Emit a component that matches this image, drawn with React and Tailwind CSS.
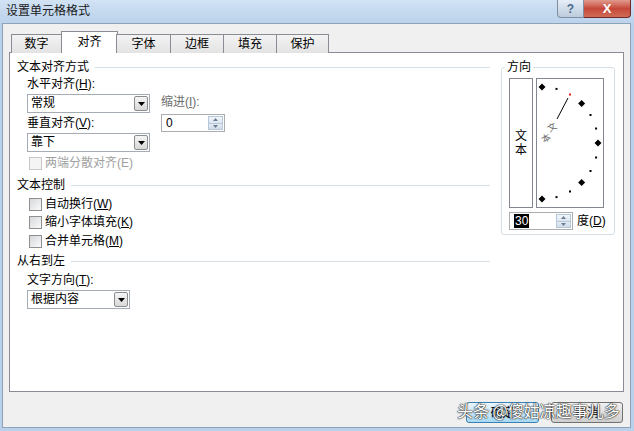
import React from "react";

const font = "font-['Liberation_Sans','Noto_Sans_CJK_SC',sans-serif]";

const Arrow = () => (
  <svg width="7" height="4" viewBox="0 0 7 4">
    <path d="M0 0h7L3.5 4z" fill="#000" />
  </svg>
);

const Dropdown = ({ value, width }) => (
  <div className={`flex h-[19px] border border-[#a5acb5] bg-white ${width}`}>
    <div className="flex-1 pl-[3px] leading-[17px]">{value}</div>
    <div className="w-[14px] m-px border border-[#8b8d91] rounded-[2px] bg-gradient-to-b from-[#f5f5f5] to-[#d8d8d8] flex items-center justify-center">
      <Arrow />
    </div>
  </div>
);

const Spinner = ({ value, width, selected }) => (
  <div className={`flex h-[18px] border border-[#abadb3] bg-white ${width}`}>
    <div className="flex-1 pl-[4px] leading-[16px]">
      {selected ? (
        <span className="bg-black text-white px-px">{value}</span>
      ) : (
        value
      )}
    </div>
    <div className="w-[15px] flex flex-col m-px">
      <div className="flex-1 border border-[#b6c8d8] bg-gradient-to-b from-[#f2f6fb] to-[#dbe6f2] flex items-center justify-center">
        <svg width="5" height="3" viewBox="0 0 5 3">
          <path d="M0 3h5L2.5 0z" fill="#6d7d8f" />
        </svg>
      </div>
      <div className="flex-1 border border-t-0 border-[#b6c8d8] bg-gradient-to-b from-[#e4ecf5] to-[#cfdbea] flex items-center justify-center">
        <svg width="5" height="3" viewBox="0 0 5 3">
          <path d="M0 0h5L2.5 3z" fill="#6d7d8f" />
        </svg>
      </div>
    </div>
  </div>
);

const Check = ({ label, disabled }) => (
  <div className="flex items-center h-[14px] ml-[12px]">
    <div
      className={`w-[13px] h-[13px] border ${
        disabled ? "border-[#c8c8c8] bg-[#f4f4f4]" : "border-[#8e8f8f] bg-gradient-to-br from-[#d6d8dc] to-[#fafafa]"
      }`}
    />
    <span className={`ml-[3px] ${disabled ? "text-[#a0a0a0]" : ""}`}>{label}</span>
  </div>
);

const Header = ({ children, className }) => (
  <div className={`flex items-center h-[14px] ${className}`}>
    <span>{children}</span>
    <div className="flex-1 h-px bg-[#d5dfe5] ml-[6px]" />
  </div>
);

const Dial = () => {
  const cx = 6;
  const cy = 65;
  const r = 56;
  const pts = [];
  for (let a = -90; a <= 90; a += 15) {
    const rad = (a * Math.PI) / 180;
    pts.push({ a, x: cx + r * Math.cos(rad), y: cy - r * Math.sin(rad) });
  }
  return (
    <svg width="66" height="128" viewBox="1 1 66 128">
      {pts.map((p) =>
        p.a % 45 === 0 ? (
          <path
            key={p.a}
            d={`M${p.x} ${p.y - 3.5}L${p.x + 3.5} ${p.y}L${p.x} ${p.y + 3.5}L${p.x - 3.5} ${p.y}z`}
            fill="#000"
          />
        ) : (
          <rect
            key={p.a}
            x={p.x - 1}
            y={p.y - 1}
            width="2"
            height="2"
            fill={p.a === 60 ? "#e02020" : "#000"}
          />
        )
      )}
      <line x1="21" y1="41" x2="32" y2="20" stroke="#000" strokeWidth="1" />
      {/* tilted preview text */}
      <g fontSize="9" fill="#666" fontFamily="Noto Sans CJK SC, sans-serif" textAnchor="middle" dominantBaseline="central">
        <text x="16" y="49" transform="rotate(-30 16 49)">文</text>
        <text x="10" y="60" transform="rotate(-30 10 60)">本</text>
      </g>
    </svg>
  );
};

export default function App() {
  const tabs = [
    { name: "数字", w: "w-[51px]" },
    { name: "对齐", w: "w-[57px]", active: true },
    { name: "字体", w: "w-[55px]" },
    { name: "边框", w: "w-[54px]" },
    { name: "填充", w: "w-[54px]" },
    { name: "保护", w: "w-[53px]" },
  ];

  return (
    <div
      className={`relative w-[634px] h-[431px] overflow-hidden flex flex-col bg-[#b9d1ea] text-[12px] leading-[14px] text-black ${font}`}
    >
      {/* Title bar */}
      <div className="h-[23px] flex items-start justify-between bg-gradient-to-b from-[#d2e3f5] via-[#c5d9ef] to-[#bcd3ec]">
        <span className="ml-[6px] mt-[4px] text-[12px] text-[#1a1a1a]">设置单元格格式</span>
        <div className="flex mr-[3px]">
          <div className="w-[27px] h-[18px] rounded-bl-[4px] border border-t-0 border-[#7f8fa3] bg-gradient-to-b from-[#e6eef8] to-[#bccbdc] flex items-center justify-center text-[#4c6a8e] text-[12px] font-bold">
            ?
          </div>
          <div className="w-[47px] h-[18px] rounded-br-[4px] border border-t-0 border-l-0 border-[#6d2a2a] bg-gradient-to-b from-[#e09a8c] via-[#c6473a] to-[#cf6b55] flex items-center justify-center text-white text-[13px] font-bold">
            X
          </div>
        </div>
      </div>

      {/* Body */}
      <div className="flex-1 ml-[2px] mr-[3px] mb-[3px] border border-[#8ea2b8] bg-[#f0f0f0] pl-[6px] pr-[6px] pt-[7px] flex flex-col">
        {/* Tabs */}
        <div className="flex items-end h-[22px] pl-[2px] relative z-10">
          {tabs.map((t) =>
            t.active ? (
              <div
                key={t.name}
                className={`${t.w} h-[22px] -ml-px -mr-px border border-b-0 border-[#898c95] bg-white flex items-center justify-center pb-[2px]`}
              >
                {t.name}
              </div>
            ) : (
              <div
                key={t.name}
                className={`${t.w} h-[19px] -ml-px first:ml-0 border border-b-0 border-[#898c95] bg-gradient-to-b from-[#f3f3f3] to-[#e3e3e3] flex items-center justify-center`}
              >
                {t.name}
              </div>
            )
          )}
        </div>

        {/* Panel */}
        <div className="h-[340px] -mt-px border border-[#898c95] bg-white flex">
          {/* Left column */}
          <div className="w-[473px] ml-[7px] flex flex-col">
            <Header className="mt-[7px]">文本对齐方式</Header>
            <div className="ml-[10px] mt-[3px]">
              水平对齐(<u>H</u>):
            </div>
            <div className="flex ml-[10px]">
              <div className="flex flex-col">
                <div className="mt-[3px]">
                  <Dropdown value="常规" width="w-[123px]" />
                </div>
                <div className="mt-[3px]">
                  垂直对齐(<u>V</u>):
                </div>
                <div className="mt-[3px]">
                  <Dropdown value="靠下" width="w-[123px]" />
                </div>
              </div>
              <div className="flex flex-col ml-[11px]">
                <div className="mt-[4px] text-[#6d6d6d]">
                  缩进(<u>I</u>):
                </div>
                <div className="mt-[5px]">
                  <Spinner value="0" width="w-[64px]" />
                </div>
              </div>
            </div>
            <div className="mt-[4px]">
              <Check label="两端分散对齐(E)" disabled />
            </div>

            <Header className="mt-[8px]">文本控制</Header>
            <div className="mt-[5px]">
              <Check label={<>自动换行(<u>W</u>)</>} />
            </div>
            <div className="mt-[4px]">
              <Check label={<>缩小字体填充(<u>K</u>)</>} />
            </div>
            <div className="mt-[5px]">
              <Check label={<>合并单元格(<u>M</u>)</>} />
            </div>

            <Header className="mt-[6px]">从右到左</Header>
            <div className="ml-[10px] mt-[5px]">
              文字方向(<u>T</u>):
            </div>
            <div className="ml-[10px] mt-[3px]">
              <Dropdown value="根据内容" width="w-[103px]" />
            </div>
          </div>

          {/* Orientation group */}
          <div className="ml-[11px] mt-[14px] w-[114px] h-[168px] relative border border-[#d5dfe5] rounded-[3px] pt-[10px] pl-[7px]">
            <span className="absolute -top-[8px] left-[3px] bg-white px-[2px]">方向</span>
            <div className="flex gap-[3px]">
              <div className="w-[24px] h-[130px] border border-[#828790] flex flex-col items-center justify-center leading-[14px]">
                <span>文</span>
                <span>本</span>
              </div>
              <div className="w-[68px] h-[130px] border border-[#828790]">
                <Dial />
              </div>
            </div>
            <div className="flex items-center mt-[4px]">
              <Spinner value="30" width="w-[64px]" selected />
              <span className="ml-[4px]">
                度(<u>D</u>)
              </span>
            </div>
          </div>
        </div>

        {/* Buttons */}
        <div className="flex justify-end gap-[12px] mt-[10px] pr-[1px]">
          <div className="w-[73px] h-[21px] rounded-[3px] border border-[#3c7fb1] bg-gradient-to-b from-[#eaf6fd] to-[#a7d9f5] flex items-center justify-center">
            确定
          </div>
          <div className="w-[72px] h-[21px] rounded-[3px] border border-[#707070] bg-gradient-to-b from-[#f2f2f2] to-[#cfcfcf] flex items-center justify-center">
            取消
          </div>
        </div>
      </div>

      {/* Watermark */}
      <div className="absolute left-[457px] top-[400px] text-[16px] leading-[20px] text-white font-['Noto_Sans_CJK_SC',sans-serif] [text-shadow:0_0_1px_#222,0_0_1px_#222,0_0_2px_#444]">
        头条 @傻姑凉趣事儿多
      </div>
    </div>
  );
}
